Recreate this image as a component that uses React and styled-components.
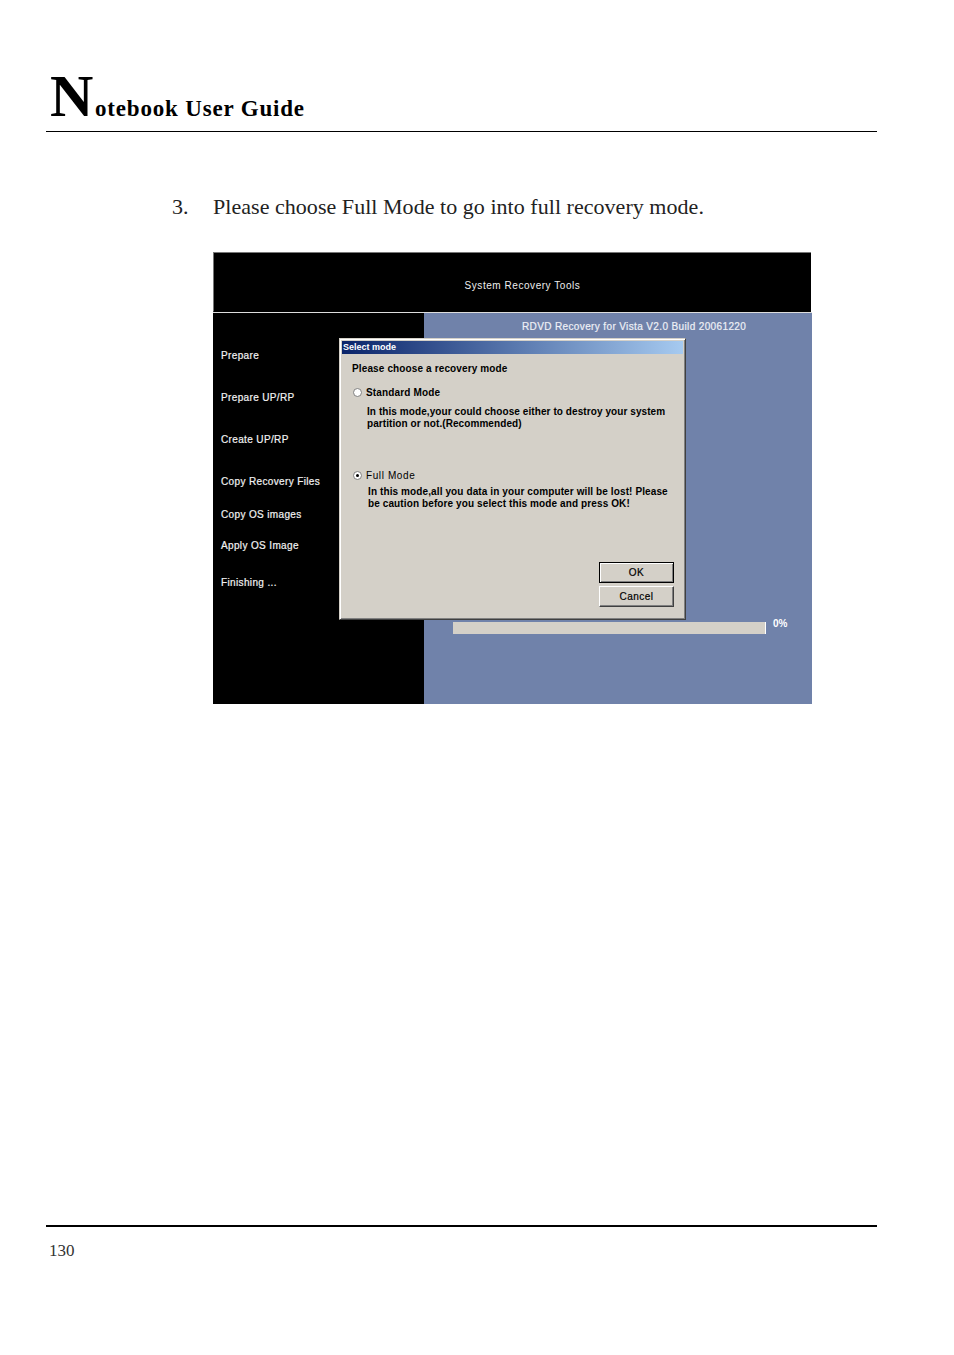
import React from "react";
import styled, { createGlobalStyle } from "styled-components";

const Global = createGlobalStyle`
  html, body { margin: 0; padding: 0; background: #fff; }
`;

const Page = styled.div`
  width: 954px;
  height: 1355px;
  box-sizing: border-box;
  padding: 0 77px 0 46px;
  display: flex;
  flex-direction: column;
  font-family: "Liberation Serif", serif;
  color: #111;
  overflow: hidden;
`;

const Header = styled.header`
  height: 132px;
  box-sizing: border-box;
  border-bottom: 1px solid #000;
  display: flex;
  align-items: baseline;
  padding: 63px 0 0 4px;
  font-weight: bold;
  color: #000;
`;
const BigN = styled.span`
  font-size: 60px;
  line-height: 66px;
  width: 45px;
`;
const Title = styled.span`
  font-size: 23px;
  letter-spacing: 0.82px;
`;

const Step = styled.p`
  margin: 60px 0 0 126px;
  display: flex;
  font-size: 22px;
  line-height: 30px;
  height: 30px;
  letter-spacing: 0.04px;
  color: #222;
`;
const StepNo = styled.span`
  width: 41px;
`;

const Shot = styled.div`
  margin: 30px 0 0 167px;
  width: 599px;
  height: 452px;
  display: flex;
  flex-direction: column;
  position: relative;
  font-family: "Liberation Sans", sans-serif;
  font-size: 10px;
  font-weight: bold;
`;
const Banner = styled.div`
  height: 60px;
  box-sizing: border-box;
  background: #000;
  border-top: 1px solid #777;
  border-left: 1px solid #777;
  color: #eee;
  font-weight: normal;
  display: flex;
  justify-content: center;
  padding: 26px 0 0 20px;
  line-height: 13px;
  letter-spacing: 0.55px;
  border-bottom: 1px solid #000;
  margin-right: 1px;
`;
const Body = styled.div`
  flex: 1;
  display: flex;
  border-top: 1px solid #ddd;
`;
const Sidebar = styled.ul`
  width: 211px;
  background: #000;
  margin: 0;
  padding: 36px 0 0 8px;
  box-sizing: border-box;
  list-style: none;
  color: #f2f2f2;
  font-weight: normal;
  -webkit-text-stroke: 0.2px #f2f2f2;
`;
const Step2 = styled.li`
  height: 13px;
  line-height: 13px;
  margin-top: ${(p) => p.$gap}px;
  letter-spacing: 0.36px;
`;
const Main = styled.div`
  flex: 1;
  background: #7082aa;
  display: flex;
  flex-direction: column;
`;
const Version = styled.div`
  margin: 7px 0 0 98px;
  height: 13px;
  line-height: 13px;
  color: #eef0f6;
  font-weight: normal;
  letter-spacing: 0.37px;
  -webkit-text-stroke: 0.2px #eef0f6;
`;
const ProgressRow = styled.div`
  margin: 289px 0 0 29px;
  display: flex;
`;
const Bar = styled.div`
  width: 313px;
  height: 12px;
  box-sizing: border-box;
  background: #d4d0c8;
  border-right: 1px solid #fff;
`;
const Percent = styled.span`
  margin: -4px 0 0 7px;
  line-height: 12px;
  color: #fff;
  font-size: 10px;
`;

const Dialog = styled.div`
  position: absolute;
  left: 126px;
  top: 86px;
  width: 347px;
  height: 282px;
  box-sizing: border-box;
  background: #d4d0c8;
  border: 1px solid;
  border-color: #d4d0c8 #404040 #404040 #d4d0c8;
  box-shadow: inset 1px 1px 0 #fff, inset -1px -1px 0 #808080;
  padding: 2px;
  color: #000;
  display: flex;
  flex-direction: column;
`;
const TitleBar = styled.div`
  height: 13px;
  line-height: 13px;
  background: linear-gradient(90deg, #0a246a, #a6caf0);
  color: #fff;
  padding-left: 1px;
  font-size: 9px;
  flex: none;
`;
const Prompt = styled.div`
  margin: 8px 0 0 10px;
  height: 13px;
  line-height: 13px;
  letter-spacing: 0.13px;
`;
const RadioRow = styled.div`
  margin: ${(p) => p.$top}px 0 0 11px;
  height: 13px;
  display: flex;
  align-items: center;
  gap: 4px;
  line-height: 13px;
  font-weight: ${(p) => (p.$light ? "normal" : "bold")};
  letter-spacing: ${(p) => (p.$light ? "0.6px" : "0.15px")};
`;
const Radio = styled.span`
  width: 9px;
  height: 9px;
  box-sizing: border-box;
  border-radius: 50%;
  background: #fff;
  border: 1px solid #808080;
  display: flex;
  align-items: center;
  justify-content: center;
  &::after {
    content: "";
    display: ${(p) => (p.$on ? "block" : "none")};
    width: 3px;
    height: 3px;
    border-radius: 50%;
    background: #000;
  }
`;
const Note = styled.p`
  margin: ${(p) => p.$top}px 0 0 ${(p) => p.$left}px;
  line-height: 12px;
  letter-spacing: ${(p) => p.$track}px;
  white-space: pre;
`;
const Actions = styled.div`
  margin: 52px 9px 0 0;
  display: flex;
  flex-direction: column;
  align-items: flex-end;
  gap: 3px;
`;
const Button = styled.div`
  width: 75px;
  height: 21px;
  box-sizing: border-box;
  display: flex;
  align-items: center;
  justify-content: center;
  background: #d4d0c8;
  font-weight: normal;
  letter-spacing: 0.5px;
  -webkit-text-stroke: 0.2px #000;
  border: 1px solid;
  border-color: ${(p) => (p.$primary ? "#000" : "#fff #404040 #404040 #fff")};
  box-shadow: ${(p) =>
    p.$primary ? "inset 1px 1px 0 #fff, inset -1px -1px 0 #808080" : "inset -1px -1px 0 #808080"};
`;

const Footer = styled.footer`
  margin-top: auto;
  margin-bottom: 94px;
  border-top: 2px solid #000;
  padding: 14px 0 0 3px;
  font-size: 17px;
  line-height: 20px;
  color: #333;
`;

const steps = [
  ["Prepare", 0],
  ["Prepare UP/RP", 29],
  ["Create UP/RP", 29],
  ["Copy Recovery Files", 29],
  ["Copy OS images", 20],
  ["Apply OS Image", 18],
  ["Finishing ...", 24],
];

export default function App() {
  return (
    <Page>
      <Global />
      <Header>
        <BigN>N</BigN>
        <Title>otebook User Guide</Title>
      </Header>
      <Step>
        <StepNo>3.</StepNo>
        Please choose Full Mode to go into full recovery mode.
      </Step>
      <Shot>
        <Banner>System Recovery Tools</Banner>
        <Body>
          <Sidebar>
            {steps.map(([label, gap]) => (
              <Step2 key={label} $gap={gap}>{label}</Step2>
            ))}
          </Sidebar>
          <Main>
            <Version>RDVD Recovery for Vista V2.0 Build 20061220</Version>
            <ProgressRow>
              <Bar />
              <Percent>0%</Percent>
            </ProgressRow>
          </Main>
        </Body>
        <Dialog>
          <TitleBar>Select mode</TitleBar>
          <Prompt>Please choose a recovery mode</Prompt>
          <RadioRow $top={11}>
            <Radio />
            Standard Mode
          </RadioRow>
          <Note $top={7} $left={25} $track={0.08}>
            {"In this mode,your could choose either to destroy your system\npartition or not.(Recommended)"}
          </Note>
          <RadioRow $top={39} $light>
            <Radio $on />
            Full Mode
          </RadioRow>
          <Note $top={4} $left={26} $track={0.11}>
            {"In this mode,all you data in your computer will be lost! Please\nbe caution before you select this mode and press OK!"}
          </Note>
          <Actions>
            <Button $primary>OK</Button>
            <Button>Cancel</Button>
          </Actions>
        </Dialog>
      </Shot>
      <Footer>130</Footer>
    </Page>
  );
}
